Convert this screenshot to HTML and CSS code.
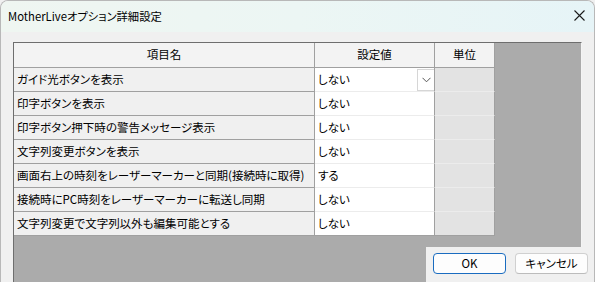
FILE: index.html
```html
<!DOCTYPE html>
<html lang="ja">
<head>
<meta charset="utf-8">
<link rel="stylesheet" href="styles.css">
</head>
<body>
<div class="window">
  <div class="titlebar">
    <span class="title">MotherLiveオプション詳細設定</span>
    <span class="close"><svg width="11" height="11" viewBox="0 0 11 11"><path d="M0.5 0.5 L10.5 10.5 M10.5 0.5 L0.5 10.5" stroke="#1a1a1a" stroke-width="1.1" fill="none"/></svg></span>
  </div>
  <div class="body">
    <div class="gridview">
      <div class="table">
        <div class="hd">項目名</div>
        <div class="hd">設定値</div>
        <div class="hd">単位</div>

        <div class="c1">ガイド光ボタンを表示</div>
        <div class="c2 combo">しない<span class="drop"><svg width="9" height="6" viewBox="0 0 9 6"><path d="M0.5 0.8 L4.5 4.8 L8.5 0.8" stroke="#555" stroke-width="1" fill="none"/></svg></span></div>
        <div class="c3"></div>

        <div class="c1">印字ボタンを表示</div>
        <div class="c2">しない</div>
        <div class="c3"></div>

        <div class="c1">印字ボタン押下時の警告メッセージ表示</div>
        <div class="c2">しない</div>
        <div class="c3"></div>

        <div class="c1">文字列変更ボタンを表示</div>
        <div class="c2">しない</div>
        <div class="c3"></div>

        <div class="c1">画面右上の時刻をレーザーマーカーと同期(接続時に取得)</div>
        <div class="c2">する</div>
        <div class="c3"></div>

        <div class="c1">接続時にPC時刻をレーザーマーカーに転送し同期</div>
        <div class="c2">しない</div>
        <div class="c3"></div>

        <div class="c1 last">文字列変更で文字列以外も編集可能とする</div>
        <div class="c2 last">しない</div>
        <div class="c3 last"></div>
      </div>
    </div>
    <div class="buttons">
      <button class="btn ok">OK</button>
      <button class="btn">キャンセル</button>
    </div>
  </div>
</div>
</body>
</html>
```
FILE: styles.css
```css
* { box-sizing: border-box; }
html, body {
  margin: 0;
  padding: 0;
  width: 595px;
  height: 282px;
  overflow: hidden;
  background: #f0f0f0;
}
body {
  font-family: "Noto Sans CJK JP", "Noto Sans", sans-serif;
  font-size: 11.5px;
  color: #000;
  font-feature-settings: "palt";
}
.window {
  position: relative;
  width: 595px;
  height: 282px;
  border: 1px solid #b8b8b8;
  border-bottom: none;
  border-radius: 8px 8px 0 0;
  background: #f0f0f0;
  overflow: hidden;
}
.titlebar {
  height: 31px;
  display: flex;
  align-items: center;
  justify-content: space-between;
  padding: 0 9px 2px 7px;
  background: linear-gradient(90deg, #eff6f1 0%, #ecf6f4 50%, #e6f4f7 100%);
}
.title {
  font-size: 11.3px;
}
.close {
  display: flex;
  align-items: center;
  margin-top: -1px;
}
.body {
  padding: 10px 0 0 12px;
}
.gridview {
  width: 569px;
  height: 250px;
  background: #ababab;
  border-top: 1px solid #6e6e6e;
  border-left: 1px solid #6e6e6e;
  border-right: 1px solid #f4f4f4;
}
.table {
  display: grid;
  grid-template-columns: 301px 120px 60px;
  grid-template-rows: 25px repeat(7, 24px);
  width: 481px;
}
.table > div {
  display: flex;
  align-items: center;
  white-space: nowrap;
  overflow: hidden;
  line-height: 1;
}
.hd {
  justify-content: center;
  background: #f3f3f3;
  border-right: 1px solid #a0a0a0;
  border-bottom: 1px solid #a0a0a0;
  padding-bottom: 1px;
}
.c1 {
  background: #f0f0f0;
  border-right: 1px solid #a0a0a0;
  border-bottom: 1px solid #a0a0a0;
  padding-left: 3px;
}
.c2 {
  background: #ffffff;
  border-right: 1px solid #a0a0a0;
  border-bottom: 1px solid #ececec;
  padding-left: 3px;
}
.c3 {
  background: #e3e3e3;
  border-right: 1px solid #a0a0a0;
  border-bottom: 1px solid #ececec;
}
.last { border-bottom-color: #a0a0a0; }
.combo {
  justify-content: space-between;
  padding-right: 0;
}
.drop {
  width: 17px;
  height: 22px;
  display: flex;
  align-items: center;
  justify-content: center;
  background: #fff;
  border: 1px solid #d6d6d6;
  border-right: none;
  margin-top: 1px;
}
.buttons {
  position: absolute;
  left: 425px;
  top: 246px;
  right: 0;
  bottom: 0;
  background: #f0f0f0;
  display: flex;
  gap: 9px;
  padding: 6px 0 0 7px;
}
.btn {
  width: 73px;
  height: 21px;
  padding: 0;
  font-family: "Noto Sans CJK JP", "Noto Sans", sans-serif;
  font-size: 11.5px;
  font-feature-settings: "palt";
  color: #000;
  background: #fdfdfd;
  border: 1px solid #d0d0d0;
  border-bottom-color: #bcbcbc;
  border-radius: 4px;
  line-height: 1;
}
.ok {
  border: 1.5px solid #1a6cc0;
}
```
